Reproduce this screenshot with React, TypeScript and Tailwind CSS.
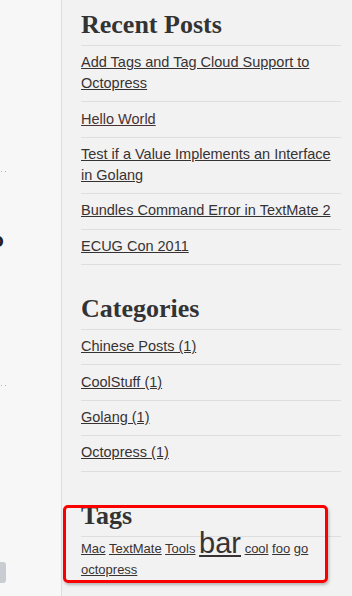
const recentPosts = [
  'Add Tags and Tag Cloud Support to Octopress',
  'Hello World',
  'Test if a Value Implements an Interface in Golang',
  'Bundles Command Error in TextMate 2',
  'ECUG Con 2011',
];

const categories = ['Chinese Posts (1)', 'CoolStuff (1)', 'Golang (1)', 'Octopress (1)'];

const tags = ['Mac', 'TextMate', 'Tools'];
const tagsAfter = ['cool', 'foo', 'go', 'octopress'];

function Heading({ children }: { children: React.ReactNode }) {
  return (
    <h2 className="font-['Liberation_Serif',serif] font-bold text-[26px] leading-[30px] text-[#333] pb-[5px] border-b border-[#dedede]">
      {children}
    </h2>
  );
}

function LinkList({ items }: { items: string[] }) {
  return (
    <ul>
      {items.map((item) => (
        <li key={item} className="pt-[6.3px] pb-[7.1px] leading-[21px] border-b border-[#dedede]">
          <a
            href="#"
            className={`underline ${item === 'Hello World' ? 'text-[#4a3232]' : 'text-[#383333]'}`}
          >
            {item}
          </a>
        </li>
      ))}
    </ul>
  );
}

export default function App() {
  return (
    <div className="w-[352px] h-[596px] overflow-hidden flex font-['Liberation_Sans',sans-serif] text-[14.5px]">
      {/* main column, cut off on the left */}
      <div className="w-[62px] shrink-0 bg-[#f7f7f7] border-r border-[#dddddd] flex flex-col overflow-hidden">
        <div className="mt-[171px] flex gap-[2.5px] pl-[1px]">
          <span className="w-[1px] h-[1px] bg-[#b5b5b5]" />
          <span className="w-[1px] h-[1px] bg-[#b5b5b5]" />
        </div>
        <div className="mt-[56px] h-[24px] leading-[24px] text-[21px] font-bold text-[#222] -ml-[9px]">o</div>
        <div className="mt-[133px] flex gap-[2.5px] pl-[1px]">
          <span className="w-[1px] h-[1px] bg-[#b5b5b5]" />
          <span className="w-[1px] h-[1px] bg-[#b5b5b5]" />
        </div>
        <div className="mt-[176px] w-[6px] h-[21px] bg-[#c9ccd0] rounded-r-[3px]" />
      </div>

      {/* sidebar */}
      <aside className="flex-1 bg-[#f2f2f2] pl-[19px] pr-[11px]">
        <section className="pt-[10px]">
          <Heading>Recent Posts</Heading>
          <LinkList items={recentPosts} />
        </section>

        <section className="mt-[29px]">
          <Heading>Categories</Heading>
          <LinkList items={categories} />
        </section>

        <section className="mt-[29px] relative">
          <Heading>Tags</Heading>
          <div className="mt-[1px] leading-[21px] text-[13px] text-[#383333]">
            {tags.map((t) => (
              <span key={t}>
                <a href="#" className="underline">{t}</a>{' '}
              </span>
            ))}
            <a href="#" className="underline text-[29px] leading-[0]">bar</a>{' '}
            {tagsAfter.map((t) => (
              <span key={t}>
                <a href="#" className="underline">{t}</a>{' '}
              </span>
            ))}
          </div>
          <div className="absolute top-[4px] -left-[18px] w-[265px] h-[78px] border-[3px] border-[#fa0000] rounded-[5px] shadow-[1px_2px_3px_rgba(0,0,0,0.25)]" />
        </section>
      </aside>
    </div>
  );
}
